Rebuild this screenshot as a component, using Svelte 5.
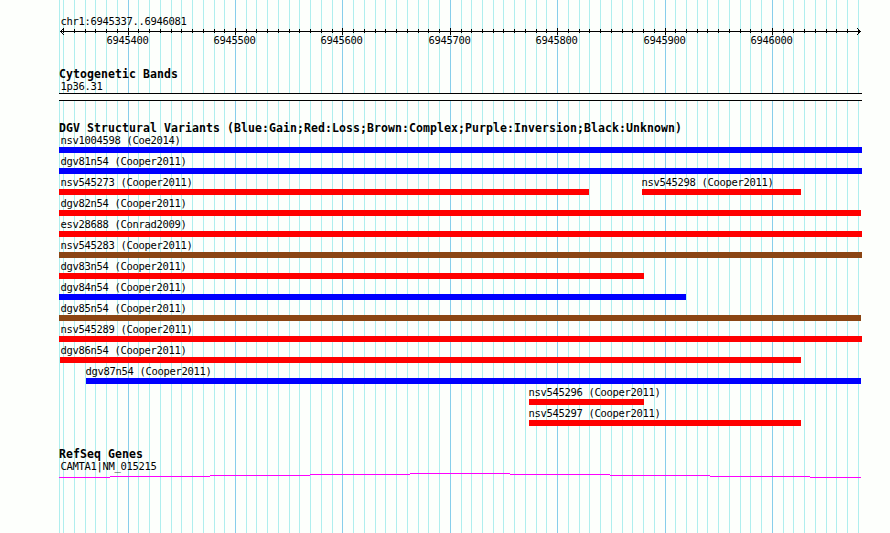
<script lang="ts">
    type Feature = {
        name: string;
        start: number;
        end: number;
        color: string;
    };

    const LEFT = 59;
    const RIGHT = 862;
    const START = 6945337;
    const SCALE = 800 / 745; // pixels per base

    const GAIN = '#0000ff';
    const LOSS = '#ff0000';
    const COMPLEX = '#8b4513';

    const toX = (pos: number) => Math.floor(60.47 + (pos - START) * SCALE);

    const ticks: { pos: number; x: number; major: boolean }[] = [];
    for (let pos = 6945340; pos <= 6946080; pos += 10) {
        ticks.push({ pos, x: toX(pos), major: pos % 100 === 0 });
    }
    const majorTicks = ticks.filter((t) => t.major);

    // start and end are pixel columns of the panel
    const rows: Feature[][] = [
        [{ name: 'nsv1004598 (Coe2014)', start: 59, end: 862, color: GAIN }],
        [{ name: 'dgv81n54 (Cooper2011)', start: 59, end: 862, color: GAIN }],
        [
            { name: 'nsv545273 (Cooper2011)', start: 59, end: 589, color: LOSS },
            { name: 'nsv545298 (Cooper2011)', start: 642, end: 801, color: LOSS }
        ],
        [{ name: 'dgv82n54 (Cooper2011)', start: 59, end: 861, color: LOSS }],
        [{ name: 'esv28688 (Conrad2009)', start: 59, end: 862, color: LOSS }],
        [{ name: 'nsv545283 (Cooper2011)', start: 59, end: 862, color: COMPLEX }],
        [{ name: 'dgv83n54 (Cooper2011)', start: 59, end: 644, color: LOSS }],
        [{ name: 'dgv84n54 (Cooper2011)', start: 59, end: 686, color: GAIN }],
        [{ name: 'dgv85n54 (Cooper2011)', start: 59, end: 861, color: COMPLEX }],
        [{ name: 'nsv545289 (Cooper2011)', start: 59, end: 862, color: LOSS }],
        [{ name: 'dgv86n54 (Cooper2011)', start: 60, end: 801, color: LOSS }],
        [{ name: 'dgv87n54 (Cooper2011)', start: 86, end: 861, color: GAIN }],
        [{ name: 'nsv545296 (Cooper2011)', start: 529, end: 644, color: LOSS }],
        [{ name: 'nsv545297 (Cooper2011)', start: 529, end: 801, color: LOSS }]
    ];

    // the intron is a very flat hat, one pixel per step
    const intron = [
        [59, 110, 4],
        [110, 210, 3],
        [210, 310, 2],
        [310, 410, 1],
        [410, 510, 0],
        [510, 610, 1],
        [610, 710, 2],
        [710, 810, 3],
        [810, 861, 4]
    ];

    const labelX = (f: Feature) => (f.start < 61 ? 1.5 : f.start - LEFT - 0.5);
</script>

<div class="browser">
    <svg class="grid" width="890" height="533" shape-rendering="crispEdges">
        <rect x={LEFT} y="0" width="1" height="533" class="minor" />
        {#each ticks as tick}
            <rect x={tick.x} y="0" width="1" height="533" class={tick.major ? 'major' : 'minor'} />
        {/each}
    </svg>

    <div class="panel">
        <header class="ruler">
            <div class="label region">chr1:6945337..6946081</div>
            <svg class="axis" width="831" height="7" viewBox="59 28 831 7" shape-rendering="crispEdges">
                <rect x="60" y="31" width="801" height="1" />
                {#each ticks as tick}
                    {#if tick.major}
                        <rect x={tick.x} y="28" width="1" height="7" />
                    {:else}
                        <rect x={tick.x} y="29" width="1" height="4" />
                    {/if}
                {/each}
                {#each [1, 2, 3] as d}
                    <rect x={60 + d} y={31 - d} width="1" height="1" />
                    <rect x={60 + d} y={31 + d} width="1" height="1" />
                    <rect x={860 - d} y={31 - d} width="1" height="1" />
                    <rect x={860 - d} y={31 + d} width="1" height="1" />
                {/each}
            </svg>
            <div class="tick-labels">
                {#each majorTicks as tick}
                    <span class="label tick-label" style="margin-left: {tick.x - LEFT - 21.5}px">{tick.pos}</span>
                {/each}
            </div>
        </header>

        <section class="cyto">
            <h2>Cytogenetic Bands</h2>
            <div class="label">1p36.31</div>
            <div class="band" style="width: {RIGHT - LEFT}px"></div>
        </section>

        <section class="variants">
            <h2>DGV Structural Variants (Blue:Gain;Red:Loss;Brown:Complex;Purple:Inversion;Black:Unknown)</h2>
            {#each rows as row}
                <div class="row">
                    {#each row as f}
                        <div class="feature">
                            <div class="label" style="margin-left: {labelX(f)}px">{f.name}</div>
                            <div
                                class="bar"
                                style="margin-left: {f.start - LEFT}px; width: {f.end - f.start}px; background: {f.color}"
                            ></div>
                        </div>
                    {/each}
                </div>
            {/each}
        </section>

        <section class="genes">
            <h2>RefSeq Genes</h2>
            <div class="label">CAMTA1|NM_015215</div>
            <svg class="intron" width="803" height="5" viewBox="59 0 803 5" shape-rendering="crispEdges">
                {#each intron as [x1, x2, y]}
                    <rect x={x1} {y} width={x2 - x1} height="1" />
                {/each}
            </svg>
        </section>
    </div>
</div>

<style>
    :global(body) {
        background: #fdfffc;
    }

    .browser {
        position: relative;
        width: 890px;
        height: 533px;
        overflow: hidden;
        color: #000;
        font-family: "DejaVu Sans Mono", monospace;
    }

    .grid {
        position: absolute;
        top: 0;
        left: 0;
    }

    .minor {
        fill: #afeeee;
    }

    .major {
        fill: #87ceeb;
    }

    .panel {
        position: relative;
        box-sizing: border-box;
        height: 533px;
        padding: 15px 0 0 59px;
    }

    svg {
        display: block;
    }

    .label {
        height: 13px;
        margin-left: 1.5px;
        font-size: 10.5px;
        line-height: 13px;
        letter-spacing: -0.321px;
        white-space: pre;
    }

    h2 {
        height: 12px;
        margin: 0;
        font-size: 11.5px;
        font-weight: bold;
        line-height: 12px;
        letter-spacing: 0.077px;
        white-space: pre;
    }

    .ruler {
        height: 53px;
    }

    .tick-labels,
    .row {
        display: grid;
    }

    .tick-labels {
        margin-top: -1px;
    }

    .tick-label,
    .feature {
        grid-area: 1 / 1;
    }

    .band {
        box-sizing: border-box;
        height: 8px;
        border: solid #000;
        border-width: 1px 0;
        background: #fdfffc;
    }

    .variants {
        margin-top: 21px;
    }

    .row {
        height: 21px;
    }

    .bar {
        height: 6px;
    }

    .genes {
        margin-top: 20px;
    }

    .intron {
        fill: #ff00ff;
    }
</style>
